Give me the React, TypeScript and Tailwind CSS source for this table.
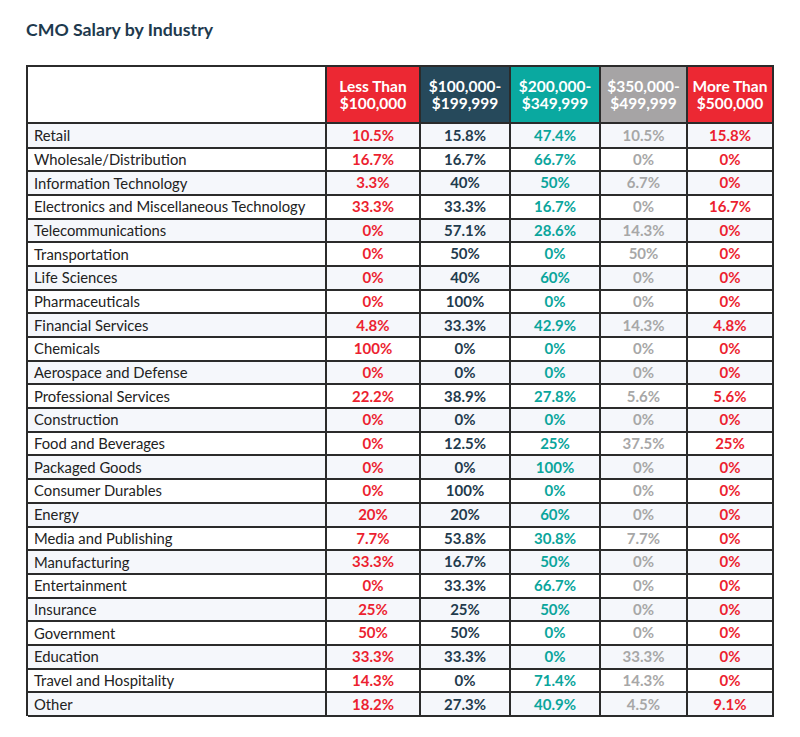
import React from "react";

const rows: [string, string, string, string, string, string][] = [
  ["Retail", "10.5%", "15.8%", "47.4%", "10.5%", "15.8%"],
  ["Wholesale/Distribution", "16.7%", "16.7%", "66.7%", "0%", "0%"],
  ["Information Technology", "3.3%", "40%", "50%", "6.7%", "0%"],
  ["Electronics and Miscellaneous Technology", "33.3%", "33.3%", "16.7%", "0%", "16.7%"],
  ["Telecommunications", "0%", "57.1%", "28.6%", "14.3%", "0%"],
  ["Transportation", "0%", "50%", "0%", "50%", "0%"],
  ["Life Sciences", "0%", "40%", "60%", "0%", "0%"],
  ["Pharmaceuticals", "0%", "100%", "0%", "0%", "0%"],
  ["Financial Services", "4.8%", "33.3%", "42.9%", "14.3%", "4.8%"],
  ["Chemicals", "100%", "0%", "0%", "0%", "0%"],
  ["Aerospace and Defense", "0%", "0%", "0%", "0%", "0%"],
  ["Professional Services", "22.2%", "38.9%", "27.8%", "5.6%", "5.6%"],
  ["Construction", "0%", "0%", "0%", "0%", "0%"],
  ["Food and Beverages", "0%", "12.5%", "25%", "37.5%", "25%"],
  ["Packaged Goods", "0%", "0%", "100%", "0%", "0%"],
  ["Consumer Durables", "0%", "100%", "0%", "0%", "0%"],
  ["Energy", "20%", "20%", "60%", "0%", "0%"],
  ["Media and Publishing", "7.7%", "53.8%", "30.8%", "7.7%", "0%"],
  ["Manufacturing", "33.3%", "16.7%", "50%", "0%", "0%"],
  ["Entertainment", "0%", "33.3%", "66.7%", "0%", "0%"],
  ["Insurance", "25%", "25%", "50%", "0%", "0%"],
  ["Government", "50%", "50%", "0%", "0%", "0%"],
  ["Education", "33.3%", "33.3%", "0%", "33.3%", "0%"],
  ["Travel and Hospitality", "14.3%", "0%", "71.4%", "14.3%", "0%"],
  ["Other", "18.2%", "27.3%", "40.9%", "4.5%", "9.1%"],
];

const textColors = [
  "text-[#ec1f30]",
  "text-[#1f3b4d]",
  "text-[#0aa59c]",
  "text-[#a7a7a7]",
  "text-[#ec1f30]",
];

const headers: { l1: string; l2: string; bg: string }[] = [
  { l1: "Less Than", l2: "$100,000", bg: "bg-[#ec2833]" },
  { l1: "$100,000-", l2: "$199,999", bg: "bg-[#26495b]" },
  { l1: "$200,000-", l2: "$349,999", bg: "bg-[#0aa9a0]" },
  { l1: "$350,000-", l2: "$499,999", bg: "bg-[#a6a4a5]" },
  { l1: "More Than", l2: "$500,000", bg: "bg-[#ec2833]" },
];

const cols = "grid grid-cols-[299px_94px_90px_90px_87px_86px]";

export default function App() {
  return (
    <div className="w-[800px] h-[737px] bg-white" style={{ fontFamily: "Lato, 'Open Sans', sans-serif" }}>
      <div className="pl-[26px] pt-[19px]">
        <h1 className="text-[17.7px] font-bold text-[#1e3a4e] leading-[22px]">
          CMO Salary by Industry
        </h1>
        <div className="mt-[24px] w-[748px] border-t-2 border-l-2 border-[#2b2b2b]">
          <div className={`${cols} h-[57px]`}>
            <div className="border-r-2 border-b-2 border-[#2b2b2b] bg-white" />
            {headers.map((h, i) => (
              <div
                key={i}
                className={`${h.bg} border-r-2 border-b-2 border-[#2b2b2b] flex flex-col items-center justify-center text-white font-bold text-[15.5px] leading-[17px] whitespace-nowrap`}
              >
                <span>{h.l1}</span>
                <span>{h.l2}</span>
              </div>
            ))}
          </div>
          {rows.map((r, ri) => (
            <div
              key={ri}
              className={`${cols} h-[23.7px] ${ri % 2 === 0 ? "bg-[#f5f7fb]" : "bg-white"}`}
            >
              <div className="border-r-2 border-b-2 border-[#2b2b2b] pl-[6px] flex items-center text-[14.8px] text-[#222] whitespace-nowrap">
                {r[0]}
              </div>
              {r.slice(1).map((v, ci) => (
                <div
                  key={ci}
                  className={`border-r-2 border-b-2 border-[#2b2b2b] flex items-center justify-center font-bold text-[15px] ${textColors[ci]}`}
                >
                  {v}
                </div>
              ))}
            </div>
          ))}
        </div>
      </div>
    </div>
  );
}
